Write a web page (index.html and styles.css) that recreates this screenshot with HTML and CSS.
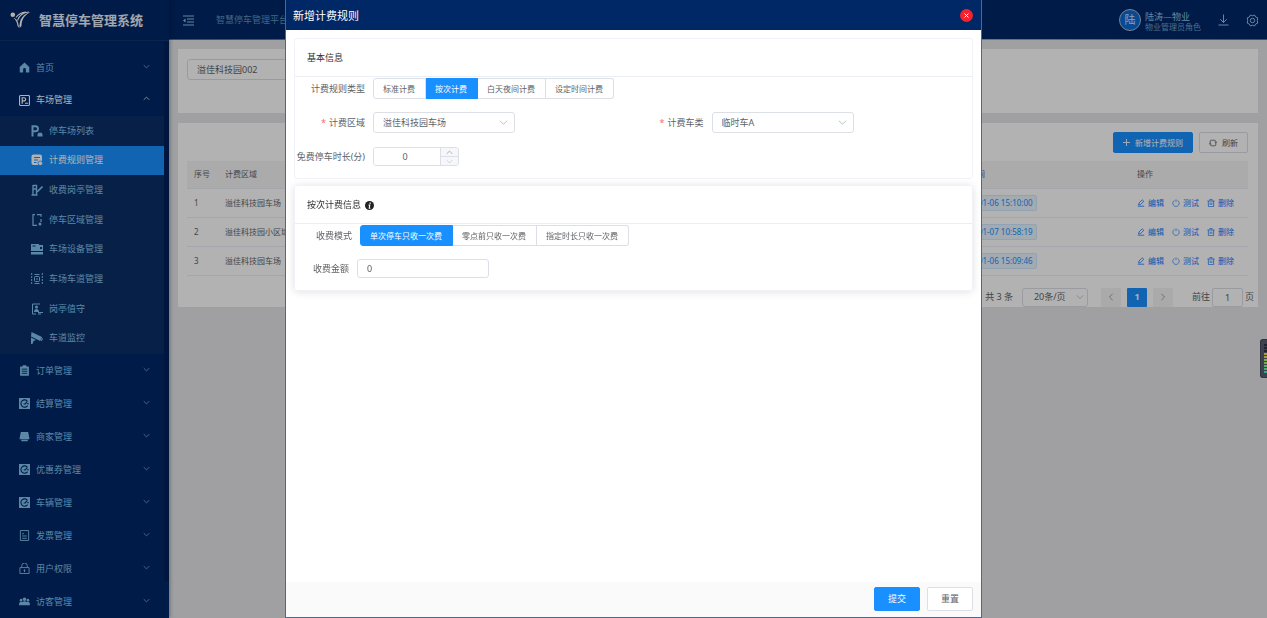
FILE: index.html
```html
<!DOCTYPE html>
<html lang="zh-CN">
<head>
<meta charset="utf-8">
<title>智慧停车管理系统</title>
<link rel="stylesheet" href="styles.css">
</head>
<body>
<svg class="defs" width="0" height="0" aria-hidden="true">
  <symbol id="down" viewBox="0 0 10 10"><path d="M1 3l4 4 4-4" fill="none" stroke="currentColor"/></symbol>
  <symbol id="up" viewBox="0 0 10 10"><path d="M1 7l4-4 4 4" fill="none" stroke="currentColor"/></symbol>
  <symbol id="gauge" viewBox="0 0 12 12"><path fill="currentColor" d="M0 0h12v12H0z"/><path d="M9.300 3.600A4 4 0 1 0 9.400 8.300M5 6.500h1.800L8.800 4" fill="none" stroke="#002766" stroke-width="1.200"/><path d="M9 5.500h1.500v1.300H9z" fill="#002766"/></symbol>
  <symbol id="edit" viewBox="0 0 10 10"><path d="M1 9h8M2 7.500l.5-2.500L6.500 1l2 1.800L4.500 7z" fill="none" stroke="currentColor"/></symbol>
  <symbol id="power" viewBox="0 0 10 10"><path d="M3.200 1.700a4 4 0 1 0 3.600 0M5 .5V4" fill="none" stroke="currentColor" stroke-width=".8"/></symbol>
  <symbol id="trash" viewBox="0 0 10 10"><path d="M.5 2.500h9M3.500 2V.7h3V2M1.700 2.500v7h6.600v-7M4 4.500v3M6 4.500v3" fill="none" stroke="currentColor" stroke-width=".9"/></symbol>
</svg>
<div class="app">
  <aside class="sidebar">
    <div class="brand">
      <svg class="brand-mark" viewBox="0 0 22 18"><circle cx="2.800" cy="3.800" r="2.300" fill="#fff"/><path fill="#fff" d="M3.500 7C7 7.500 8.500 11 9 16.800L7.500 15C7 11.500 6 9 3.500 7zM9.500 17C9 8.500 13 2.500 21 1c-6 2.500-9.500 7-9.500 14z"/><path d="M7.500 9.500C9 5 13 1.500 19 1M6 6.500C8 3.500 11 1.500 16 1" fill="none" stroke="#fff" stroke-width="1.100"/></svg>
      <strong>智慧停车管理系统</strong>
    </div>
    <div class="nav-wrap">
    <nav class="nav">
      <a class="item" href="#"><svg class="ic" viewBox="0 0 12 12"><path fill="currentColor" d="M6 .5L.8 5.500V11.500h3.700V8a1.500 1.500 0 0 1 3 0v3.500h3.700v-6z"/></svg>首页<svg class="chev"><use href="#down"/></svg></a>
      <a class="item open" href="#"><svg class="ic" viewBox="0 0 12 12"><rect x=".6" y=".6" width="10.800" height="10.800" rx="1" fill="none" stroke="currentColor" stroke-width="1.200"/><path d="M3.500 9.500V3h2a1.600 1.600 0 0 1 0 3.500h-2M6.500 9h3.500" fill="none" stroke="currentColor" stroke-width="1.300"/></svg>车场管理<svg class="chev"><use href="#up"/></svg></a>
      <div class="sub">
        <a class="sub-item" href="#"><svg class="ic" viewBox="0 0 12 12"><path d="M1.500 11.500V1.200h3a2.400 2.400 0 0 1 0 5h-3" fill="none" stroke="currentColor" stroke-width="2"/><path fill="currentColor" d="M6.500 9.500l.8-1.800h3.400l.8 1.800v2h-5z"/></svg>停车场列表</a>
        <a class="sub-item active" href="#"><svg class="ic" viewBox="0 0 12 12"><rect x=".5" y=".5" width="10.500" height="10.500" rx="2" fill="currentColor"/><path d="M3 3.500h6M3 6h4M3 8.500h2.500" stroke="#1890ff"/><circle cx="9.300" cy="9.300" r="2.300" fill="currentColor" stroke="#1890ff" stroke-width=".8"/></svg>计费规则管理</a>
        <a class="sub-item" href="#"><svg class="ic" viewBox="0 0 12 12"><path d="M2 1.500h3.500v9M2 1v10M.5 11h6M2 5h4" fill="none" stroke="currentColor" stroke-width="1.400"/><path d="M6 8l5.500-5.500" stroke="currentColor" stroke-width="1.700"/></svg>收费岗亭管理</a>
        <a class="sub-item" href="#"><svg class="ic" viewBox="0 0 12 12"><path d="M4 .7H2v10.600h4M6 .7h4v2M10 5v3" fill="none" stroke="currentColor" stroke-width="1.200"/><circle cx="9" cy="10" r="1.500" fill="currentColor"/></svg>停车区域管理</a>
        <a class="sub-item" href="#"><svg class="ic" viewBox="0 0 12 12"><path fill="currentColor" fill-rule="evenodd" d="M0 1h8v1h4v6H0zm9 3v2h2V4zM0 9h12v2.500H0z"/><path d="M1.500 3h3" stroke="#0b2e68"/></svg>车场设备管理</a>
        <a class="sub-item" href="#"><svg class="ic" viewBox="0 0 12 12"><path d="M.7 0v12M11.300 0v12" stroke="currentColor" stroke-dasharray="2 1"/><rect x="3.500" y="3.500" width="5" height="5" rx="1" fill="none" stroke="currentColor"/><path d="M3.500 1.500h5M3.500 10.500h5M5 6h2" stroke="currentColor"/></svg>车场车道管理</a>
        <a class="sub-item" href="#"><svg class="ic" viewBox="0 0 12 12"><path d="M9 1H1.500v10H5M7 9.500h5M7 11h3" fill="none" stroke="currentColor"/><circle cx="5.500" cy="4" r="1.500" fill="currentColor"/><path fill="currentColor" d="M3 9c0-4 5-4 5 0z"/></svg>岗亭值守</a>
        <a class="sub-item" href="#"><svg class="ic" viewBox="0 0 12 12"><path fill="currentColor" d="M.5 0l10.500 5-1.800 4L0 4.500zM11 6l1 .6-1 2.400-1.200-.5zM0 5.500l5 2.500-2.500 1L1.500 12H0z"/></svg>车道监控</a>
      </div>
      <a class="item" href="#"><svg class="ic" viewBox="0 0 12 12"><path fill="currentColor" d="M1.200 1.500H4V.3h4v1.200h2.800v10.300H1.200z"/><path d="M3 4.500h6M3 6.800h6M3 9.100h6" stroke="#002766"/></svg>订单管理<svg class="chev"><use href="#down"/></svg></a>
      <a class="item" href="#"><svg class="ic"><use href="#gauge"/></svg>结算管理<svg class="chev"><use href="#down"/></svg></a>
      <a class="item" href="#"><svg class="ic" viewBox="0 0 12 12"><path fill="currentColor" d="M2 1h8l1.300 6.500H.7zM2.500 9.500h7v1.800h-7zM.7 7.500h10.600V9H.7z"/></svg>商家管理<svg class="chev"><use href="#down"/></svg></a>
      <a class="item" href="#"><svg class="ic"><use href="#gauge"/></svg>优惠券管理<svg class="chev"><use href="#down"/></svg></a>
      <a class="item" href="#"><svg class="ic"><use href="#gauge"/></svg>车辆管理<svg class="chev"><use href="#down"/></svg></a>
      <a class="item" href="#"><svg class="ic" viewBox="0 0 12 12"><path d="M1.500.6h9v10.800h-9zM3.500 4h2M3.500 6.500h5M3.500 9h5" fill="none" stroke="currentColor"/></svg>发票管理<svg class="chev"><use href="#down"/></svg></a>
      <a class="item" href="#"><svg class="ic" viewBox="0 0 12 12"><path d="M1 5h10v6.500H1zM3 5V3a3 3 0 0 1 6 0v2M6 7v3M5 8h2" fill="none" stroke="currentColor"/></svg>用户权限<svg class="chev"><use href="#down"/></svg></a>
      <a class="item" href="#"><svg class="ic" viewBox="0 0 12 12"><circle cx="6" cy="3.500" r="1.900" fill="currentColor"/><circle cx="2.200" cy="4.500" r="1.400" fill="currentColor"/><circle cx="9.800" cy="4.500" r="1.400" fill="currentColor"/><path fill="currentColor" d="M0 10c0-4.500 2-4 3.500-3.500 1-1 4-1 5 0C10 6 12 5.500 12 10z"/></svg>访客管理<svg class="chev"><use href="#down"/></svg></a>
    </nav>
    </div>
  </aside>
  <div class="main">
    <header class="topbar">
      <button class="plain" aria-label="折叠菜单"><svg width="11" height="11" viewBox="0 0 11 11"><path d="M0 1h11M4 4h7M4 7h7M0 10h11" stroke="currentColor"/><path fill="currentColor" d="M0 5.500L2.500 3.500v4z"/></svg></button>
      <span class="platform">智慧停车管理平台</span>
      <div class="user">
        <span class="avatar">陆</span>
        <span class="who"><span class="name">陆涛—物业</span><span class="role">物业管理员角色</span></span>
      </div>
      <button class="plain" aria-label="下载"><svg width="11" height="12" viewBox="0 0 11 12"><path d="M5.500.5v8M2.300 5.300l3.200 3.200 3.200-3.200M.5 11h10" fill="none" stroke="currentColor"/></svg></button>
      <button class="plain" aria-label="设置"><svg width="13" height="13" viewBox="0 0 13 13"><path d="M4.500 1l2 .8 2-.8 1.200 2 2 .8-.4 2.700.4 2.700-2 .8-1.200 2-2-.8-2 .8-1.200-2-2-.8.400-2.700-.4-2.700 2-.8z" fill="none" stroke="currentColor"/><circle cx="6.500" cy="6.500" r="2.200" fill="none" stroke="currentColor"/></svg></button>
    </header>
    <main class="content">
      <section class="panel filter">
        <input class="field" type="text" aria-label="停车场" value="溢佳科技园002">
      </section>
      <section class="panel list">
        <div class="tools">
          <button class="btn primary"><svg width="7" height="7" viewBox="0 0 7 7"><path d="M3.500 0v7M0 3.500h7" stroke="currentColor" stroke-width=".9"/></svg>新增计费规则</button>
          <button class="btn"><svg width="8" height="8" viewBox="0 0 10 10"><path d="M1.500 5V2.500Q1.500 1.500 3 1.500h3.500q2 0 2 2v.8M8.500 5v2.500q0 1-1.500 1H3.500q-2 0-2-2v-.8M7 3.500l1.500 1.300L10 3.500M0 6.500l1.500-1.300L3 6.500" fill="none" stroke="currentColor"/></svg>刷新</button>
        </div>
        <div class="table-wrap">
        <table class="table">
          <colgroup><col class="c-no"><col><col class="c-time"><col class="c-act"></colgroup>
          <thead><tr><th>序号</th><th>计费区域</th><th>创建时间</th><th>操作</th></tr></thead>
          <tbody>
            <tr><td>1</td><td>溢佳科技园车场</td><td><span class="tag">2023-01-06 15:10:00</span></td><td><div class="acts"><button class="link"><svg><use href="#edit"/></svg>编辑</button><button class="link"><svg><use href="#power"/></svg>测试</button><button class="link"><svg><use href="#trash"/></svg>删除</button></div></td></tr>
            <tr><td>2</td><td>溢佳科技园小区域</td><td><span class="tag">2023-01-07 10:58:19</span></td><td><div class="acts"><button class="link"><svg><use href="#edit"/></svg>编辑</button><button class="link"><svg><use href="#power"/></svg>测试</button><button class="link"><svg><use href="#trash"/></svg>删除</button></div></td></tr>
            <tr><td>3</td><td>溢佳科技园车场</td><td><span class="tag">2023-01-06 15:09:46</span></td><td><div class="acts"><button class="link"><svg><use href="#edit"/></svg>编辑</button><button class="link"><svg><use href="#power"/></svg>测试</button><button class="link"><svg><use href="#trash"/></svg>删除</button></div></td></tr>
          </tbody>
        </table>
        </div>
        <div class="pager">
          <span>共 3 条</span>
          <span class="select size"><select aria-label="每页条数"><option>20条/页</option></select><svg><use href="#down"/></svg></span>
          <div class="pages">
            <button class="page" aria-label="上一页"><svg viewBox="0 0 10 10"><path d="M7 1L3 5l4 4" fill="none" stroke="currentColor"/></svg></button>
            <button class="page current">1</button>
            <button class="page" aria-label="下一页"><svg viewBox="0 0 10 10"><path d="M3 1l4 4-4 4" fill="none" stroke="currentColor"/></svg></button>
          </div>
          <label class="jump">前往<input type="text" value="1">页</label>
        </div>
      </section>
    </main>
  </div>
</div>
<div class="overlay">
  <div class="dialog" role="dialog" aria-labelledby="dlg-title">
    <header class="dialog-head">
      <h1 id="dlg-title">新增计费规则</h1>
      <button class="close" aria-label="关闭"><svg width="5" height="5" viewBox="0 0 5 5"><path d="M.5.5l4 4M4.500.5l-4 4" stroke="#fff"/></svg></button>
    </header>
    <form class="dialog-body">
      <section class="card">
        <h2>基本信息</h2>
        <div class="row first">
          <span class="lab">计费规则类型</span>
          <div class="radios" role="radiogroup" aria-label="计费规则类型">
            <label><input type="radio" name="type"><span>标准计费</span></label>
            <label><input type="radio" name="type" checked><span>按次计费</span></label>
            <label><input type="radio" name="type"><span>白天夜间计费</span></label>
            <label><input type="radio" name="type"><span>设定时间计费</span></label>
          </div>
        </div>
        <div class="cols">
          <div class="row"><label class="lab req" for="area">计费区域</label><span class="select"><select id="area"><option>溢佳科技园车场</option></select><svg><use href="#down"/></svg></span></div>
          <div class="row"><label class="lab req" for="car">计费车类</label><span class="select"><select id="car"><option>临时车A</option></select><svg><use href="#down"/></svg></span></div>
        </div>
        <div class="row">
          <label class="lab" for="free">免费停车时长(分)</label>
          <div class="stepper"><input id="free" type="text" value="0"><span class="steps"><button type="button" aria-label="增加"><svg><use href="#up"/></svg></button><button type="button" aria-label="减少"><svg><use href="#down"/></svg></button></span></div>
        </div>
      </section>
      <section class="card raised">
        <h2>按次计费信息<svg width="9" height="9" viewBox="0 0 10 10"><circle cx="5" cy="5" r="5" fill="#222"/><path d="M5.700 1.800v1.400M4 4.600h1.300L4.700 8H6" fill="none" stroke="#fff" stroke-width="1.200"/></svg></h2>
        <div class="row first">
          <span class="lab mode">收费模式</span>
          <div class="radios" role="radiogroup" aria-label="收费模式">
            <label><input type="radio" name="mode" checked><span>单次停车只收一次费</span></label>
            <label><input type="radio" name="mode"><span>零点前只收一次费</span></label>
            <label><input type="radio" name="mode"><span>指定时长只收一次费</span></label>
          </div>
        </div>
        <div class="row"><label class="lab amount" for="fee">收费金额</label><input class="money" id="fee" type="text" value="0"></div>
      </section>
    </form>
    <footer class="dialog-foot">
      <button class="btn big primary">提交</button>
      <button class="btn big">重置</button>
    </footer>
  </div>
</div>
<div class="meter" aria-hidden="true"><span></span></div>
</body>
</html>
```
FILE: styles.css
```css
* { box-sizing: border-box; }
body {
  margin: 0;
  overflow: hidden;
  font: 9px/12px "Noto Sans", "Noto Sans CJK SC", sans-serif;
  color: #606266;
}
button, input, select { font: inherit; color: inherit; margin: 0; padding: 0; border: 0; }
button { cursor: pointer; }
a { color: inherit; text-decoration: none; }
h1, h2 { margin: 0; font-weight: 400; }
svg { flex: none; }
.defs { position: absolute; }

.app { display: flex; height: 100vh; background: #e5e6e9; }

/* sidebar */
.sidebar {
  flex: none;
  display: flex;
  flex-direction: column;
  width: 169px;
  background: #002766;
  color: #82c3ee;
  box-shadow: 1px 0 4px rgba(0, 21, 41, .35);
  z-index: 1;
}
.brand {
  flex: none;
  display: flex;
  align-items: center;
  gap: 7px;
  height: 41px;
  padding-left: 10px;
  color: #fff;
  border-bottom: 1px solid #0d376f;
}
.brand-mark { width: 22px; height: 18px; }
.brand strong { font-size: 13px; line-height: 18px; font-weight: 700; color: #e8eef8; }
.nav-wrap { flex: 1; min-height: 0; overflow: hidden; padding: 10px 5px 0 0; background: linear-gradient(#00205a, #00205a) right top / 5px 540px no-repeat; }
.item { display: flex; align-items: center; gap: 6px; height: 33px; padding: 0 14px 0 19px; }
.item.open { height: 32px; color: #fff; }
.ic { width: 11px; height: 11px; }
.chev { width: 7px; height: 7px; margin: 0 0 3px auto; }
.sub { display: flex; flex-direction: column; height: 238px; padding-bottom: 1px; background: #0b2e68; }
.sub-item { flex: 1; display: flex; align-items: center; gap: 6px; padding-left: 31px; }
.sub-item .ic { width: 12px; height: 12px; }
.sub-item.active { background: #1890ff; color: #fff; }

/* top bar */
.main { flex: 1; min-width: 0; }
.topbar {
  display: flex;
  align-items: center;
  height: 40px;
  padding: 0 8px 0 14px;
  background: linear-gradient(90deg, #c02bc0, #3f7fe0 12%, #30b090 45%, #c0b040 74%, #d04050) bottom / 100% 1px no-repeat #002766;
  color: #8fc4ea;
}
.plain { display: flex; background: none; }
.platform { margin-left: 22px; color: #5f93bd; }
.user { display: flex; align-items: center; gap: 4px; margin-left: auto; }
.avatar { width: 22px; height: 22px; border: 1px solid #aeb9cb; border-radius: 50%; background: #0a6bd6; color: #c9e2fb; font-size: 11px; line-height: 20px; text-align: center; }
.who { display: flex; flex-direction: column; padding-top: 2px; line-height: 11px; }
.role { font-size: 8px; line-height: 10px; color: #6f9fc6; }
.user + .plain { margin: 0 17px; }

/* page content */
.content { display: flex; flex-direction: column; gap: 10px; padding: 9px; }
.panel { background: #fff; }
.filter { height: 64px; padding: 10px 9px; }
.field { width: 142px; height: 21px; padding: 0 9px; border: 1px solid #dcdfe6; border-radius: 3px; background: #fff; }
.tools { display: flex; justify-content: flex-end; gap: 6px; padding: 9px 10px 8px; }
.btn { display: flex; align-items: center; justify-content: center; gap: 5px; height: 21px; padding: 0 9px; border: 1px solid #dcdfe6; border-radius: 2px; background: #fff; font-size: 8px; }
.btn.primary { background: #1890ff; border-color: #1890ff; color: #fff; }
.table-wrap { padding: 0 10px 0 9px; }
.table { width: 100%; table-layout: fixed; border-collapse: collapse; font-size: 8px; line-height: 12px; }
.c-no { width: 31px; }
.c-time { width: 184px; }
.c-act { width: 118px; }
.table th, .table td { padding: 0 7px; text-align: left; font-weight: 400; border-bottom: 1px solid #ebeef5; }
.table th { height: 27px; background: #f5f5f5; color: #666; }
.table td { height: 29px; }
.tag { display: inline-block; padding: 1px 3px; border: 1px solid #d1e9ff; border-radius: 2px; background: #e8f4ff; color: #1890ff; white-space: nowrap; }
.acts { display: flex; gap: 8px; }
.link { display: flex; align-items: center; gap: 3px; background: none; color: #1677ff; }
.link svg { width: 8px; height: 8px; }
.pager { display: flex; align-items: center; justify-content: flex-end; padding: 12px 4px 0 0; }
.pager .size { width: 66px; height: 19px; margin: 0 13px 0 9px; }
.pager .size select { padding-left: 11px; }
.pages { display: flex; gap: 6px; }
.page { display: flex; align-items: center; justify-content: center; width: 20px; height: 19px; border-radius: 1px; background: #f4f4f5; color: #8a8d93; }
.page svg { width: 8px; height: 8px; }
.page.current { background: #1890ff; color: #fff; font-weight: 700; }
.jump { display: flex; align-items: center; gap: 2px; margin-left: 19px; }
.jump input { width: 31px; height: 19px; border: 1px solid #dcdfe6; border-radius: 2px; text-align: center; }

/* form controls */
.select { display: flex; align-items: center; position: relative; width: 142px; height: 21px; }
.select select { appearance: none; width: 100%; height: 100%; padding: 0 20px 0 9px; border: 1px solid #dcdfe6; border-radius: 3px; background: #fff; }
.select svg { position: absolute; right: 7px; width: 9px; height: 9px; color: #b4b8c0; pointer-events: none; }
.pager .select svg { right: 4px; width: 8px; height: 8px; }

/* dialog */
.overlay { position: fixed; inset: 0; display: flex; justify-content: center; background: rgba(0, 0, 0, .3); z-index: 5; }
.dialog { display: flex; flex-direction: column; width: 55%; border: 1px solid #4767a0; border-top: 0; background: #fff; }
.dialog-head { flex: none; display: flex; align-items: center; justify-content: space-between; height: 30px; padding: 1px 8px 0 7px; background: #002766; color: #fff; }
.dialog-head h1 { font-size: 11px; line-height: 16px; }
.close { display: flex; align-items: center; justify-content: center; width: 13px; height: 13px; border-radius: 50%; background: #f5222d; }
.dialog-body { flex: 1; display: flex; flex-direction: column; gap: 6px; padding: 8px; }
.card { border: 1px solid #f0f2f7; border-radius: 3px; padding-bottom: 12px; }
.card.raised { box-shadow: 0 1px 8px rgba(0, 0, 0, .12); }
.card h2 { display: flex; align-items: center; gap: 4px; height: 38px; padding: 1px 12px 0; border-bottom: 1px solid #ebeef5; font-size: 9px; color: #303133; }
.row { display: flex; align-items: center; }
.row.first { padding: 1px 0 13px; }
.cols { display: grid; grid-template-columns: 1fr 1fr; padding-bottom: 14px; }
.lab { width: 78px; padding-right: 8px; text-align: right; white-space: nowrap; }
.lab.mode { width: 65px; }
.lab.amount { width: 62px; }
.req::before { content: "*"; margin-right: 3px; color: #f56c6c; }
.radios { display: flex; font-size: 8px; }
.radios label { position: relative; }
.radios input { position: absolute; opacity: 0; }
.radios span { display: block; height: 21px; padding: 0 10px 0 9px; border: solid #dcdfe6; border-width: 1px 1px 1px 0; line-height: 20px; }
.radios label:first-child span { border-left-width: 1px; border-radius: 3px 0 0 3px; }
.radios label:last-child span { border-radius: 0 3px 3px 0; }
.radios input:checked + span { background: #1890ff; border-color: #1890ff; color: #fff; }
.stepper { display: flex; width: 86px; height: 19px; border: 1px solid #dcdfe6; border-radius: 3px; overflow: hidden; }
.stepper input { flex: 1; min-width: 0; padding: 0 4px 0 0; text-align: center; }
.steps { display: flex; flex-direction: column; width: 18px; border-left: 1px solid #dcdfe6; background: #f5f7fa; }
.steps button { flex: 1; min-height: 0; display: flex; align-items: center; justify-content: center; background: none; color: #909399; }
.steps button + button { border-top: 1px solid #dcdfe6; color: #c0c4cc; }
.steps svg { width: 7px; height: 7px; }
.money { width: 132px; height: 19px; padding: 0 9px; border: 1px solid #dcdfe6; border-radius: 3px; }
.dialog-foot { display: flex; justify-content: flex-end; gap: 7px; padding: 5px 8px 6px; background: #fafafa; }
.btn.big { width: 46px; height: 24px; font-size: 9px; }

/* edge meter */
.meter { position: fixed; right: 0; top: 339px; width: 7px; height: 39px; padding: 4px 0 4px 3px; border: 1px solid #30343f; border-right: 0; border-radius: 3px 0 0 3px; background: #3d4252; z-index: 6; }
.meter span { display: block; height: 100%; background: repeating-linear-gradient(transparent 0 2px, #3d4252 2px 3px), linear-gradient(#20232c 30%, #b59a3c 30%, #7fae4c 60%, #2fa98c); }
```
